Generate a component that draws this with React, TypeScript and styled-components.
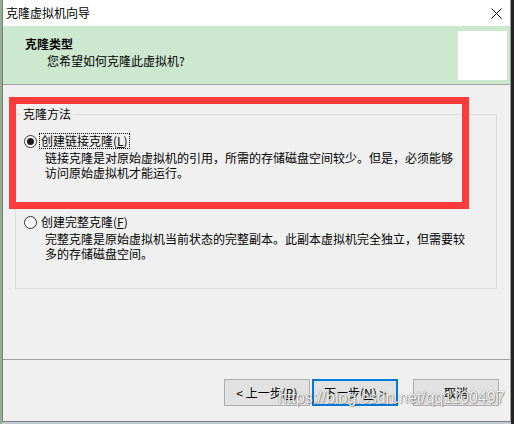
import React from 'react';
import styled, { createGlobalStyle } from 'styled-components';

const Global = createGlobalStyle`
  html, body { margin: 0; padding: 0; }
  body {
    width: 514px; height: 424px; overflow: hidden;
    font-family: "Noto Sans CJK SC", "Microsoft YaHei", sans-serif;
    font-size: 12px; color: #000;
  }
`;

const Desktop = styled.div`
  position: relative;
  width: 514px;
  height: 424px;
  display: grid;
  grid-template-columns: 2px 509px 3px;
  grid-template-rows: 422px 2px;
  background: #c2cbd3;
`;

const Strip = styled.div<{ $tone: string }>`
  background: ${p => p.$tone};
`;

const Window = styled.div`
  display: flex;
  flex-direction: column;
  background: #f0f0f0;
  border-left: 1px solid #7c7c7c;
  border-right: 1px solid #9a9a9a;
  border-bottom: 1px solid #7c7c7c;
`;

const TitleBar = styled.div`
  height: 26px;
  flex: none;
  display: flex;
  align-items: center;
  justify-content: space-between;
  padding: 0 8px 0 3px;
  background: #fff;
  line-height: 16px;
`;

const Header = styled.div`
  height: 58px;
  flex: none;
  display: flex;
  justify-content: space-between;
  background: #cce8cf;
`;

const HeaderText = styled.div`
  padding: 10px 0 0 22px;
  line-height: 16px;
`;

const Heading = styled.div`
  font-weight: bold;
`;

const Sub = styled.div`
  margin-top: 1px;
  padding-left: 22px;
`;

const HeaderBox = styled.div`
  width: 49px;
  height: 49px;
  margin: 5px 3px 4px 0;
  background: #fff;
`;

const Rule = styled.div`
  height: 1px;
  flex: none;
  background: #a0a0a0;
`;

const Body = styled.div`
  flex: 1;
  padding: 21px 13px 0 12px;
`;

const Group = styled.fieldset`
  margin: 0;
  padding: 0;
  height: 183px;
  box-sizing: border-box;
  border: 1px solid #dcdcdc;
  min-width: 0;
`;

const Legend = styled.legend`
  margin-left: 5px;
  padding: 0 2px;
  line-height: 16px;
`;

const Options = styled.div`
  display: flex;
  flex-direction: column;
  gap: 34px;
  padding: 11px 0 0 8px;
`;

const Row = styled.div`
  display: flex;
  align-items: center;
  gap: 2px;
  height: 16px;
`;

const Radio = styled.span<{ $on?: boolean }>`
  width: 13px;
  height: 13px;
  box-sizing: border-box;
  border-radius: 50%;
  border: 1px solid #333;
  background: #fff;
  display: flex;
  align-items: center;
  justify-content: center;
  &::after {
    content: '';
    width: 7px;
    height: 7px;
    border-radius: 50%;
    background: ${p => (p.$on ? '#1a1a1a' : 'transparent')};
  }
`;

const Label = styled.span<{ $focus?: boolean }>`
  line-height: 14px;
  padding: 0 1px;
  border: 1px dotted ${p => (p.$focus ? '#000' : 'transparent')};
`;

const Key = styled.span`
  text-decoration: underline;
  text-underline-offset: 1px;
`;

const Desc = styled.div`
  margin-top: 1px;
  padding-left: 21px;
  line-height: 15px;
  white-space: nowrap;
`;

const Footer = styled.div`
  height: 61px;
  flex: none;
  box-sizing: border-box;
  display: flex;
  justify-content: flex-end;
  align-items: flex-start;
  padding: 19px 11px 0 0;
`;

const Btn = styled.button<{ $primary?: boolean; $gap?: number }>`
  width: 86px;
  height: 27px;
  margin-left: ${p => p.$gap ?? 0}px;
  box-sizing: border-box;
  background: #e1e1e1;
  border: ${p => (p.$primary ? '2px solid #0078d7' : '1px solid #adadad')};
  font-family: inherit;
  font-size: 12px;
  color: #000;
  padding: 0;
  line-height: 16px;
`;

const Annotation = styled.div`
  position: absolute;
  left: 9px;
  top: 97px;
  width: 460px;
  height: 112px;
  box-sizing: border-box;
  border: 7px solid #ff3a3a;
  pointer-events: none;
`;

const Watermark = styled.div`
  position: absolute;
  left: 278px;
  top: 389px;
  font-family: "Liberation Sans", Arial, sans-serif;
  font-size: 16px;
  line-height: 18px;
  color: rgba(255, 255, 255, 0.95);
  text-shadow: 0 0 1px rgba(0, 0, 0, 0.55), 1px 1px 1px rgba(0, 0, 0, 0.3);
  pointer-events: none;
  white-space: nowrap;
`;

const CloseIcon = () => (
  <svg width="11" height="11" viewBox="0 0 11 11">
    <path d="M0.5 0.5 L10.5 10.5 M10.5 0.5 L0.5 10.5" stroke="#000" strokeWidth="1" />
  </svg>
);

export default function App() {
  return (
    <>
      <Global />
      <Desktop>
        <Strip $tone="#93ae93" />
        <Window>
          <TitleBar>
            <span>克隆虚拟机向导</span>
            <CloseIcon />
          </TitleBar>
          <Header>
            <HeaderText>
              <Heading>克隆类型</Heading>
              <Sub>您希望如何克隆此虚拟机?</Sub>
            </HeaderText>
            <HeaderBox />
          </Header>
          <Rule />
          <Body>
            <Group>
              <Legend>克隆方法</Legend>
              <Options>
                <div>
                  <Row>
                    <Radio $on />
                    <Label $focus>
                      创建链接克隆(<Key>L</Key>)
                    </Label>
                  </Row>
                  <Desc>
                    链接克隆是对原始虚拟机的引用，所需的存储磁盘空间较少。但是，必须能够
                    <br />
                    访问原始虚拟机才能运行。
                  </Desc>
                </div>
                <div>
                  <Row>
                    <Radio />
                    <Label>
                      创建完整克隆(<Key>F</Key>)
                    </Label>
                  </Row>
                  <Desc>
                    完整克隆是原始虚拟机当前状态的完整副本。此副本虚拟机完全独立，但需要较
                    <br />
                    多的存储磁盘空间。
                  </Desc>
                </div>
              </Options>
            </Group>
          </Body>
          <Rule />
          <Footer>
            <Btn>
              &lt; 上一步(<Key>B</Key>)
            </Btn>
            <Btn $primary $gap={2}>
              下一步(<Key>N</Key>) &gt;
            </Btn>
            <Btn $gap={15}>取消</Btn>
          </Footer>
        </Window>
        <Strip $tone="#232323" />
        <Strip $tone="#93ae93" />
        <Strip $tone="#c2cbd3" />
        <Strip $tone="#232323" />
        <Annotation />
        <Watermark>https://blog.csdn.net/qq1100497</Watermark>
      </Desktop>
    </>
  );
}
